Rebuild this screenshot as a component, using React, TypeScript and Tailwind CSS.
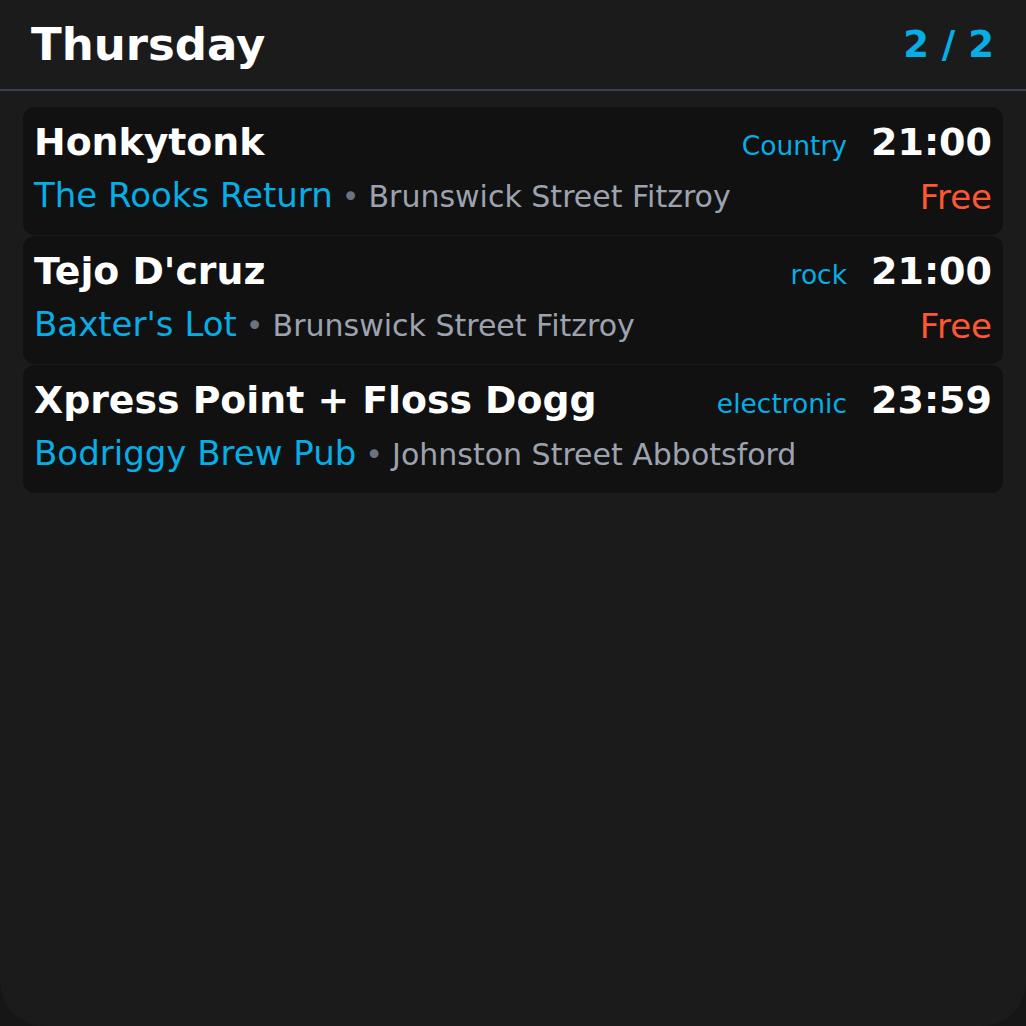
import React from 'react'

interface Gig {
  title: string
  genre: string
  time: string
  venue: string
  address: string
  price?: string
}

const GIGS: Gig[] = [
  { title: 'Honkytonk', genre: 'Country', time: '21:00', venue: 'The Rooks Return', address: 'Brunswick Street Fitzroy', price: 'Free' },
  { title: "Tejo D'cruz", genre: 'rock', time: '21:00', venue: "Baxter's Lot", address: 'Brunswick Street Fitzroy', price: 'Free' },
  { title: 'Xpress Point + Floss Dogg', genre: 'electronic', time: '23:59', venue: 'Bodriggy Brew Pub', address: 'Johnston Street Abbotsford' },
]

function GigCard({ gig }: { gig: Gig }) {
  return (
    <div className="h-[128px] rounded-[12px] bg-[#111111] px-[11px] pt-[16px]">
      {/* Title row */}
      <div className="flex items-baseline">
        <span className="min-w-0 flex-1 text-[37.8px] font-bold leading-none text-white">{gig.title}</span>
        <span className="mr-[24px] text-[26.5px] leading-none text-[#07ade4]">{gig.genre}</span>
        <span className="text-[38px] font-bold leading-none text-white">{gig.time}</span>
      </div>

      {/* Venue row */}
      <div className="mt-[16px] flex items-baseline">
        <span className="text-[34px] leading-none text-[#07ade4]">{gig.venue}</span>
        <span className="mx-[9px] text-[30px] leading-none text-[#6b7280]">•</span>
        <span className="text-[30px] leading-none text-[#9ca3af]">{gig.address}</span>
        {gig.price && (
          <span className="relative top-[2px] ml-auto text-[34px] leading-none text-[#ff5733]">{gig.price}</span>
        )}
      </div>
    </div>
  )
}

export default function App() {
  return (
    <div className="h-[1026px] w-[1026px] bg-[#161616]" style={{ fontFamily: '"DejaVu Sans", sans-serif' }}>
      <div className="flex h-full flex-col rounded-b-[44px] bg-[#1b1b1b]">
        {/* Header */}
        <div className="flex h-[91px] items-center justify-between border-b-2 border-[#394150] pl-[31px] pr-[32px]">
          <span className="text-[45px] font-bold leading-none text-white">Thursday</span>
          <span className="text-[37px] font-bold leading-none text-[#07ade4]">2 / 2</span>
        </div>

        {/* Gig list */}
        <div className="flex flex-col gap-[1px] px-[23px] pt-[16px]">
          {GIGS.map(g => (
            <GigCard key={g.title} gig={g} />
          ))}
        </div>
      </div>
    </div>
  )
}
